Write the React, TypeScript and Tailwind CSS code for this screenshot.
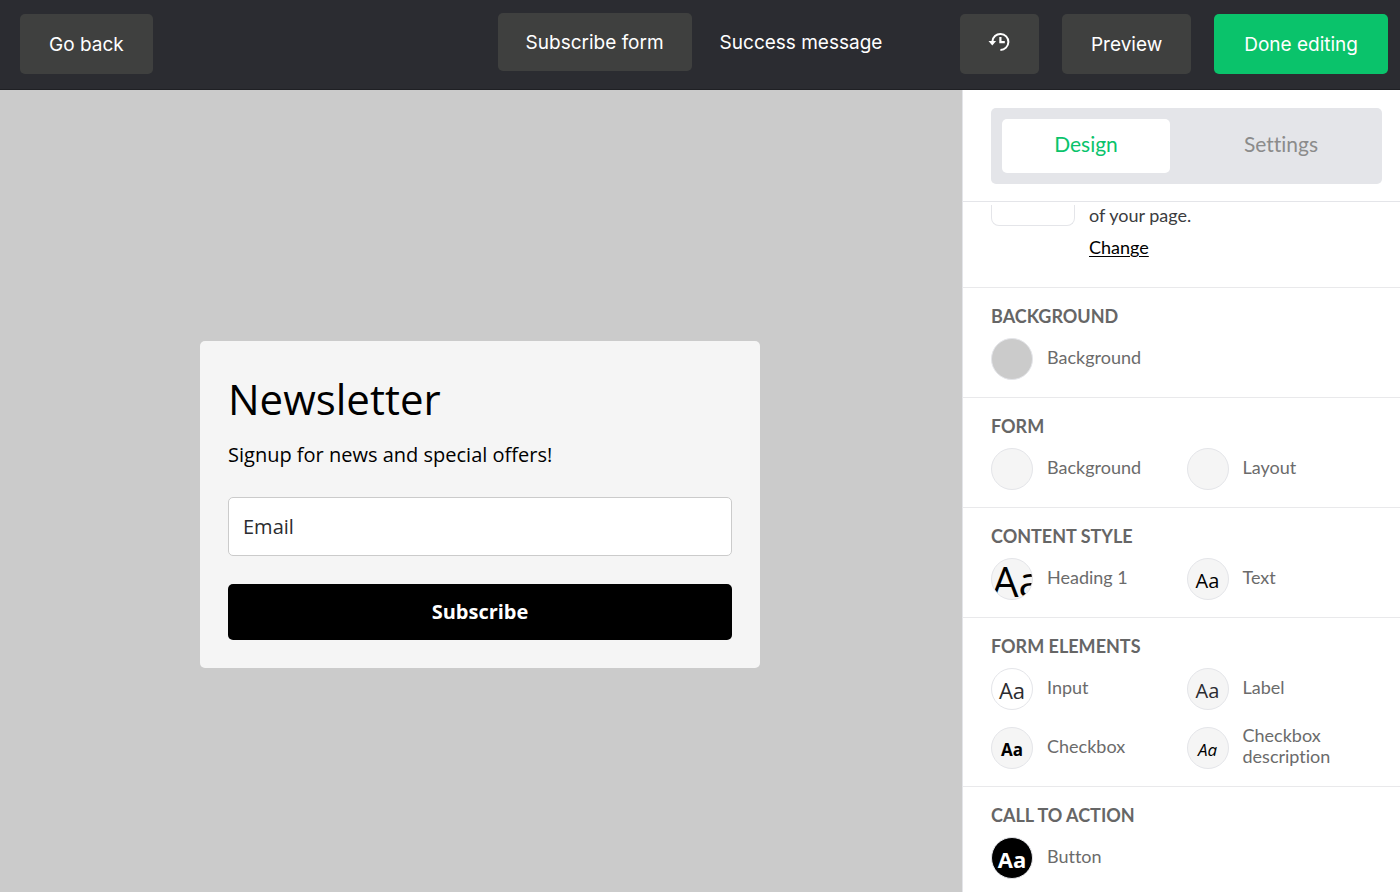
import { useState } from "react";
import clsx from "clsx";

const SECTIONS = [
  {
    title: "Background",
    items: [{ label: "Background", swatch: "bg-[#cbcbcb]", text: "" }],
  },
  {
    title: "Form",
    items: [
      { label: "Background", swatch: "bg-[#f5f5f5]", text: "" },
      { label: "Layout", swatch: "bg-[#f5f5f5]", text: "" },
    ],
  },
  {
    title: "Content style",
    items: [
      { label: "Heading 1", swatch: "bg-[#f5f5f5] justify-start text-[42px] text-black", text: "Aa" },
      { label: "Text", swatch: "bg-[#f5f5f5] justify-center text-[20px] text-black", text: "Aa" },
    ],
  },
  {
    title: "Form elements",
    items: [
      { label: "Input", swatch: "bg-white justify-center text-[22px] text-[#2b2c30]", text: "Aa" },
      { label: "Label", swatch: "bg-[#f5f5f5] justify-center text-[20px] text-[#2b2c30]", text: "Aa" },
      { label: "Checkbox", swatch: "bg-[#f5f5f5] justify-center text-[17px] font-bold text-black", text: "Aa" },
      { label: "Checkbox description", swatch: "bg-[#f5f5f5] justify-center text-[17px] italic text-black", text: "Aa" },
    ],
  },
  {
    title: "Call to action",
    items: [{ label: "Button", swatch: "bg-black justify-center text-[22px] font-bold text-white", text: "Aa" }],
  },
];

function HistoryIcon() {
  return (
    <svg width="22" height="20" viewBox="0 0 22 20" fill="none" stroke="currentColor">
      <path d="M4.4 9.5a8 8 0 1 1 8 8.4" strokeWidth="2" />
      <path d="M0.5 9h7.6L4.3 13.6z" fill="currentColor" stroke="none" />
      <path d="M12.4 5v5.2h4.4" strokeWidth="2.2" />
    </svg>
  );
}

export default function App() {
  const [view, setView] = useState("form");
  const [tab, setTab] = useState("design");

  return (
    <div className="flex h-screen flex-col overflow-hidden bg-[#cbcbcb]">
      {/* Top bar */}
      <header className="grid h-[90px] shrink-0 grid-cols-[1fr_auto_1fr] items-center border-b border-[#1f2024] bg-[#2b2c31] pr-3 pb-[1px] pl-5 font-['Inter',sans-serif] text-[19px] leading-7 text-white">
        <div>
          <button className="h-[60px] rounded-[5px] bg-[#3f403f] px-[29px] pt-0.5">Go back</button>
        </div>
        <nav className="flex pb-1">
          <button
            onClick={() => setView("form")}
            className={clsx("h-[58px] rounded-[5px] px-7 pt-0.5", view === "form" && "bg-[#3f403f]")}
          >
            Subscribe form
          </button>
          <button
            onClick={() => setView("success")}
            className={clsx("h-[58px] rounded-[5px] px-7 pt-0.5", view === "success" && "bg-[#3f403f]")}
          >
            Success message
          </button>
        </nav>
        <div className="flex justify-end gap-[23px]">
          <button
            aria-label="History"
            className="flex h-[60px] w-[79px] items-center justify-center rounded-[5px] bg-[#3f403f] pb-1"
          >
            <HistoryIcon />
          </button>
          <button className="h-[60px] rounded-[5px] bg-[#3f403f] px-[29px] pt-0.5">Preview</button>
          <button className="h-[60px] rounded-[5px] bg-[#0ac36b] px-[30px] pt-0.5">Done editing</button>
        </div>
      </header>

      <div className="flex min-h-0 flex-1">
        {/* Form preview */}
        <main className="flex flex-1 items-center justify-center pt-[27px] pr-[2px] font-['Open_Sans',sans-serif]">
          <form
            onSubmit={(e) => e.preventDefault()}
            className="w-full max-w-[560px] rounded-[5px] bg-[#f5f5f5] p-7 text-[20px] leading-7 text-black"
          >
            <h1 className="pt-1 text-[42px] leading-[52px]">Newsletter</h1>
            <p className="mt-4 mb-7">Signup for news and special offers!</p>
            <input
              type="email"
              aria-label="Email"
              placeholder="Email"
              className="block h-[59px] w-full rounded-[5px] border border-[#cbcbcb] bg-white px-[14px] placeholder:text-[#2b2c30]"
            />
            <button className="mt-7 block h-14 w-full rounded-[5px] bg-black font-bold text-white">Subscribe</button>
          </form>
        </main>

        {/* Sidebar */}
        <aside className="flex w-[438px] shrink-0 flex-col border-l border-[#e4e5e9] bg-white font-['Lato',sans-serif] text-[18px] leading-[21px] text-[#6b6b6b] [font-variant-ligatures:none]">
          <div className="border-b border-[#e4e5e9] pt-[18px] pr-[18px] pb-[17px] pl-7">
            <div className="flex gap-[21px] rounded-[5px] bg-[#e4e5e9] p-[11px] text-[21px] text-[#8b8b8b]">
              <button
                onClick={() => setTab("design")}
                className={clsx("h-[54px] w-[168px] rounded-[5px] pb-1.5", tab === "design" && "bg-white text-[#0ac36b]")}
              >
                Design
              </button>
              <button
                onClick={() => setTab("settings")}
                className={clsx("h-[54px] flex-1 rounded-[5px] pb-1.5", tab === "settings" && "bg-white text-[#0ac36b]")}
              >
                Settings
              </button>
            </div>
          </div>

          <div className="min-h-0 flex-1 overflow-hidden pt-[3px]">
            <div className="flex gap-[14px] border-b border-[#e9e9eb] pb-[29px] pl-7">
              <div className="h-[21px] w-[84px] rounded-b-[8px] border border-t-0 border-[#e4e5e9]" />
              <div>
                <p className="text-[#3b3c40]">of your page.</p>
                <a href="#" className="mt-[11px] block text-black underline underline-offset-2">
                  Change
                </a>
              </div>
            </div>
            {SECTIONS.map((s) => (
              <section key={s.title} className="border-b border-[#e9e9eb] pt-4 pr-[18px] pb-[17px] pl-7">
                <h2 className="mb-[10px] font-bold leading-6 text-[#666] uppercase">{s.title}</h2>
                <div className="grid grid-cols-2 gap-y-[17px]">
                  {s.items.map((item) => (
                    <button key={item.label} className="flex items-center gap-[14px] text-left">
                      <span
                        className={clsx(
                          "flex size-[42px] shrink-0 items-center overflow-hidden rounded-full border border-[#e4e5e9] pt-[3px] font-['Open_Sans',sans-serif]",
                          item.swatch
                        )}
                      >
                        {item.text}
                      </span>
                      <span className="-mt-1">{item.label}</span>
                    </button>
                  ))}
                </div>
              </section>
            ))}
          </div>
        </aside>
      </div>
    </div>
  );
}
